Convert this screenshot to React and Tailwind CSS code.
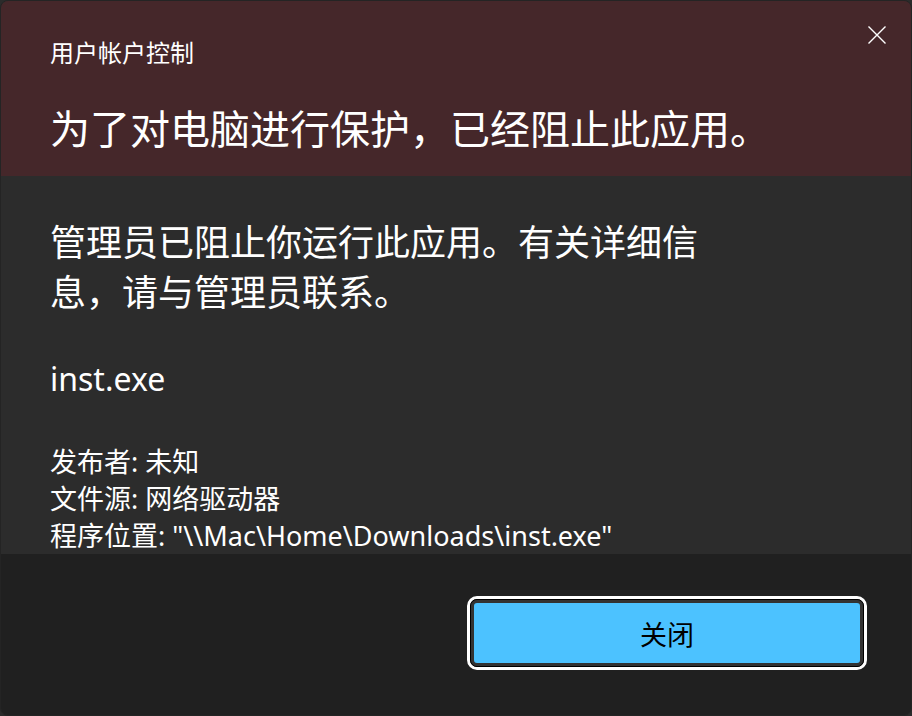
export default function App() {
  return (
    <div className="w-[912px] h-[716px] bg-[#2b2b2b] font-['Noto_Sans','Noto_Sans_CJK_SC',sans-serif] text-white">
      <div className="w-[912px] h-[716px] rounded-[8px] overflow-hidden border border-[#242424] flex flex-col">
        <div className="relative h-[175px] shrink-0 bg-[#45272a] pl-[49px] pt-[36px]">
          <div className="text-[24px] leading-[32px]">用户帐户控制</div>
          <div className="mt-[34px] text-[40px] leading-[52px]">为了对电脑进行保护，已经阻止此应用。</div>
          <button className="absolute right-[24px] top-[24px] w-[20px] h-[20px] flex items-center justify-center">
            <svg width="20" height="20" viewBox="0 0 20 20" fill="none" stroke="#ffffff" strokeWidth="1.4">
              <path d="M1.5 1.5 L18.5 18.5 M18.5 1.5 L1.5 18.5" />
            </svg>
          </button>
        </div>
        <div className="h-[378px] shrink-0 bg-[#2c2c2c] pl-[49px] pt-[42px]">
          <div className="text-[36px] leading-[50px] w-[700px]">
            管理员已阻止你运行此应用。有关详细信
            <br />
            息，请与管理员联系。
          </div>
          <div className="mt-[39px] text-[32px] leading-[44px]">inst.exe</div>
          <div className="mt-[42px] text-[27px] leading-[37px]">
            <div>发布者: 未知</div>
            <div>文件源: 网络驱动器</div>
            <div>程序位置: "\\Mac\Home\Downloads\inst.exe"</div>
          </div>
        </div>
        <div className="flex-1 bg-[#202020] flex justify-end items-start pr-[44px] pt-[42px]">
          <div className="w-[400px] h-[74px] border-[3px] border-white rounded-[10px]">
            <div className="w-full h-full border border-black rounded-[7px]">
              <button className="w-full h-full border-[3px] border-[#333333] rounded-[6px] bg-[#4cc2ff] text-black text-[27px] leading-none pt-[3px] flex items-center justify-center">
                关闭
              </button>
            </div>
          </div>
        </div>
      </div>
    </div>
  );
}
